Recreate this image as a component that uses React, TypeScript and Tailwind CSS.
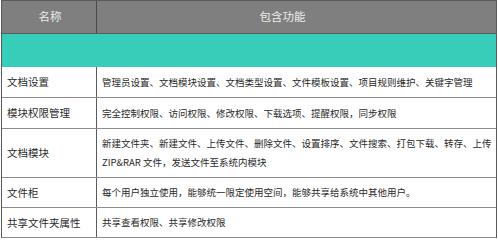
const rows: { name: string; lines: string[]; h: string }[] = [
  {
    name: "文档设置",
    lines: ["管理员设置、文档模块设置、文档类型设置、文件模板设置、项目规则维护、关键字管理"],
    h: "h-[31px]",
  },
  {
    name: "模块权限管理",
    lines: ["完全控制权限、访问权限、修改权限、下载选项、提醒权限，同步权限"],
    h: "h-[31px]",
  },
  {
    name: "文档模块",
    lines: [
      "新建文件夹、新建文件、上传文件、删除文件、设置排序、文件搜索、打包下载、转存、上传",
      "ZIP&RAR 文件，发送文件至系统内模块",
    ],
    h: "h-[49px]",
  },
  {
    name: "文件柜",
    lines: ["每个用户独立使用，能够统一限定使用空间，能够共享给系统中其他用户。"],
    h: "h-[30px]",
  },
  {
    name: "共享文件夹属性",
    lines: ["共享查看权限、共享修改权限"],
    h: "h-[30px]",
  },
];

export default function App() {
  return (
    <div
      className="h-[240px] w-[498px] bg-white pl-[1px]"
      style={{ fontFamily: '"Microsoft YaHei", "Noto Sans CJK SC", sans-serif' }}
    >
      <div className="w-[496px] border-x border-[#5a5a5a]">
        {/* header */}
        <div className="flex h-[34px] border-y border-[#5a5a5a] bg-[#7f7f7f] text-[11.5px] text-[#ececec]">
          <div className="flex w-[95px] items-center justify-center border-r border-[#4a4a4a] pl-[2px]">名称</div>
          <div className="flex flex-1 items-center justify-center pr-[28px]">包含功能</div>
        </div>

        {/* merged teal band */}
        <div className="h-[33px] bg-[#37cdb8]" />

        {rows.map((r) => (
          <div key={r.name} className={`flex ${r.h} border-b border-[#8c8c8c] text-[#2a2a2a]`}>
            <div className="flex w-[95px] items-center border-r border-[#5a5a5a] pl-[5px] text-[10.5px]">
              {r.name}
            </div>
            <div className="flex flex-1 flex-col justify-center gap-[6px] pl-[5px] text-[9.5px] leading-[13px] whitespace-nowrap">
              {r.lines.map((l) => (
                <span key={l}>{l}</span>
              ))}
            </div>
          </div>
        ))}
      </div>
    </div>
  );
}
